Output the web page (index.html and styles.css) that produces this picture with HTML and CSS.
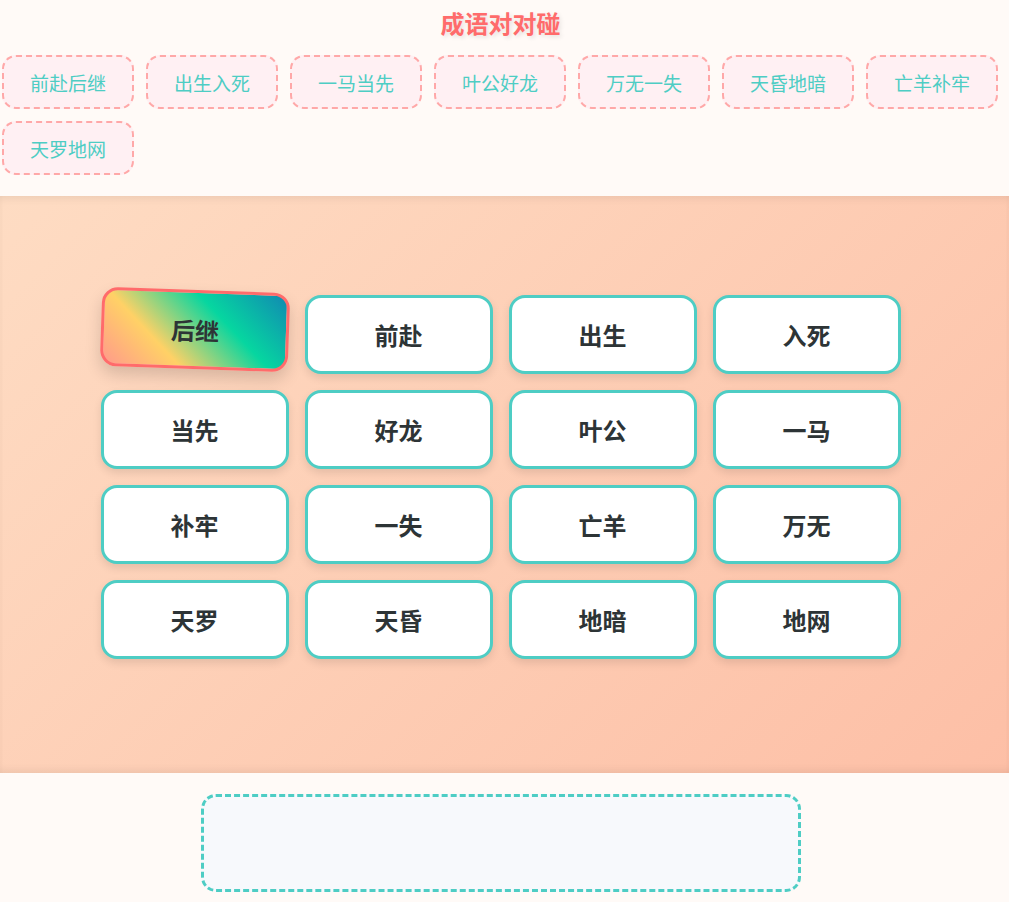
FILE: index.html
```html
<!DOCTYPE html>
<html lang="zh-CN">
<head>
  <meta charset="UTF-8">
  <title>成语对对碰</title>
  <link rel="stylesheet" href="styles.css">
</head>
<body>
  <div class="top">
    <h1 class="title">成语对对碰</h1>
    <div class="idioms">
      <div class="idiom">前赴后继</div>
      <div class="idiom">出生入死</div>
      <div class="idiom">一马当先</div>
      <div class="idiom">叶公好龙</div>
      <div class="idiom">万无一失</div>
      <div class="idiom">天昏地暗</div>
      <div class="idiom">亡羊补牢</div>
      <div class="idiom">天罗地网</div>
    </div>
  </div>

  <div class="board">
    <div class="grid">
      <div class="tile selected">后继</div>
      <div class="tile">前赴</div>
      <div class="tile">出生</div>
      <div class="tile">入死</div>
      <div class="tile">当先</div>
      <div class="tile">好龙</div>
      <div class="tile">叶公</div>
      <div class="tile">一马</div>
      <div class="tile">补牢</div>
      <div class="tile">一失</div>
      <div class="tile">亡羊</div>
      <div class="tile">万无</div>
      <div class="tile">天罗</div>
      <div class="tile">天昏</div>
      <div class="tile">地暗</div>
      <div class="tile">地网</div>
    </div>
  </div>

  <div class="bottom">
    <div class="dropzone"></div>
  </div>
</body>
</html>
```

FILE: styles.css
```css
body {
  margin: 0;
  background: #fffaf7;
  font-family: "Noto Sans CJK SC", "Noto Sans", sans-serif;
  color: #2d3436;
}
.top {
  padding: 5px 10px 21px 2px;
}
.title {
  margin: 0 0 14px;
  font-size: 24px;
  line-height: 36px;
  text-align: center;
  color: #ff6b6b;
  text-shadow: 2px 2px 4px rgba(0, 0, 0, 0.1);
}
.idioms {
  display: flex;
  flex-wrap: wrap;
  gap: 12px;
}
.idiom {
  width: 132px;
  height: 54px;
  box-sizing: border-box;
  display: flex;
  align-items: center;
  justify-content: center;
  border: 2px dashed #ffa8a8;
  border-radius: 14px;
  background: #fff0f3;
  color: #4ecdc4;
  font-size: 19px;
}
.board {
  padding: 99px 8px 114px 0;
  background: linear-gradient(135deg, #fedcc3, #fdbfa6);
  box-shadow: inset 0 6px 8px -4px rgba(0, 0, 0, 0.08), inset 0 -6px 8px -4px rgba(0, 0, 0, 0.08);
}
.grid {
  width: 800px;
  margin: 0 auto;
  display: grid;
  grid-template-columns: repeat(4, 1fr);
  gap: 16px;
}
.tile {
  height: 79px;
  box-sizing: border-box;
  display: flex;
  align-items: center;
  justify-content: center;
  border: 3px solid #4ecdc4;
  border-radius: 16px;
  background: #fff;
  font-size: 24px;
  font-weight: bold;
  box-shadow: 0 4px 8px rgba(0, 0, 0, 0.1);
}
.tile.selected {
  border-color: #ff6b6b;
  background: linear-gradient(45deg, #ff9a8b, #ffd166 30%, #06d6a0 65%, #118ab2);
  transform: translateY(-5px) rotate(2deg);
  box-shadow: 0 8px 16px rgba(0, 0, 0, 0.15);
}
.bottom {
  padding: 21px 8px 10px 0;
}
.dropzone {
  width: 600px;
  height: 98px;
  box-sizing: border-box;
  margin: 0 auto;
  border: 3px dashed #4ecdc4;
  border-radius: 15px;
  background: #f7f9fc;
}
```
